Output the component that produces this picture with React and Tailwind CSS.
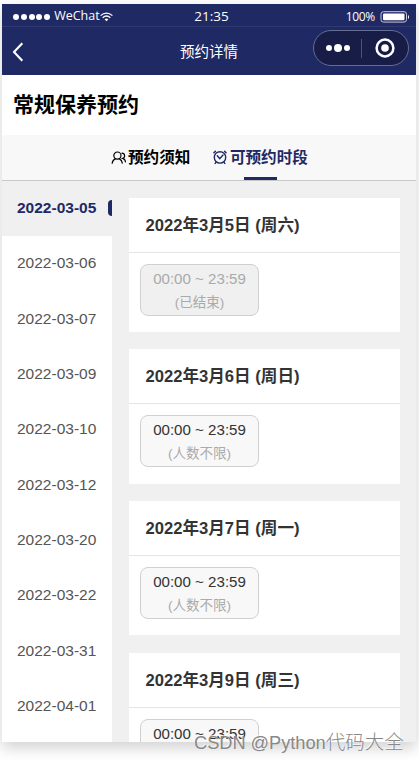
import React from 'react';

const dates = [
  '2022-03-05', '2022-03-06', '2022-03-07', '2022-03-09', '2022-03-10',
  '2022-03-12', '2022-03-20', '2022-03-22', '2022-03-31', '2022-04-01',
];

const days = [
  { title: '2022年3月5日 (周六)', note: '(已结束)', ended: true },
  { title: '2022年3月6日 (周日)', note: '(人数不限)' },
  { title: '2022年3月7日 (周一)', note: '(人数不限)' },
  { title: '2022年3月9日 (周三)', note: '(人数不限)' },
];

function StatusBar() {
  return (
    <div className="grid h-[23px] grid-cols-3 items-center border-b border-[#303a70] pl-[11px] pr-[6px] font-['Open_Sans','Noto_Sans',sans-serif] text-[12px] leading-none">
      <div className="flex items-center">
        <div className="flex gap-[1.8px] pt-[3px]">
          {[0, 1, 2, 3, 4].map((i) => <span key={i} className="size-[6px] rounded-full bg-white" />)}
        </div>
        <span className="ml-[4px] mt-[3px] text-[12.5px]">WeChat</span>
        <svg className="mt-[4px]" width="13" height="10" viewBox="0 0 13 10" fill="none" stroke="white" strokeWidth="1.3">
          <path d="M.6 3.6c3.5-3.3 8.3-3.3 11.8 0M2.7 5.7c2.3-2 5.3-2 7.6 0" />
          <path d="M4.6 7.3c1.2-1 2.6-1 3.8 0L6.5 9.2z" fill="white" stroke="none" />
        </svg>
      </div>
      <span className="mt-[3px] text-center text-[13.5px]">21:35</span>
      <div className="mt-[2px] flex items-center justify-end">
        <span className="mt-[1px] text-[12px] tracking-[-0.3px]">100%</span>
        <svg className="ml-[5px] mt-px" width="30" height="12" viewBox="0 0 30 12">
          <rect x="1" y=".7" width="25.5" height="10.4" rx="2.5" fill="none" stroke="#c8cadb" />
          <rect x="3" y="2.6" width="21.5" height="6.7" rx="1" fill="white" />
          <path d="M28 4c1.4.8 1.4 3.2 0 4z" fill="white" />
        </svg>
      </div>
    </div>
  );
}

function NavBar() {
  return (
    <div className="flex h-[47px] items-center pl-[10px] pr-[7px]">
      <svg className="mt-[3px]" width="12" height="20" viewBox="0 0 12 20" fill="none" stroke="white" strokeWidth="2.1">
        <path d="M10.3 1.2 2 10l8.3 8.8" />
      </svg>
      <h1 className="ml-[156px] mt-[3px] whitespace-nowrap text-[14.5px] leading-5">预约详情</h1>
      <div className="ml-auto mb-[5px] flex h-[36px] w-[96px] shrink-0 items-center rounded-full border border-[#666d92] bg-[#171d47]">
        <div className="flex w-[47px] items-center justify-center gap-[2px]">
          <span className="size-[6px] rounded-full bg-white" />
          <span className="size-[8px] rounded-full bg-white" />
          <span className="size-[6px] rounded-full bg-white" />
        </div>
        <span className="h-[19px] w-px bg-[#4b5179]" />
        <svg className="ml-[13px]" width="20" height="20" viewBox="0 0 20 20">
          <circle cx="10" cy="10" r="8.4" fill="none" stroke="white" strokeWidth="2.5" />
          <circle cx="10" cy="10" r="3.8" fill="white" />
        </svg>
      </div>
    </div>
  );
}

function PeopleIcon() {
  return (
    <svg width="16" height="14" viewBox="0 0 16 14" fill="none" stroke="currentColor" strokeWidth="1.2" strokeLinecap="round">
      <circle cx="6.4" cy="4.6" r="3.6" />
      <path d="M1.2 12.2c.2-2 1.5-3.6 3.1-4.3M8.4 7.9c1.7.7 2.6 2 2.9 4.3M11 2.2c3.2.2 3.5 4.4.7 5.2 1.9.6 2.6 1.7 2.7 3.4" />
    </svg>
  );
}

function ClockIcon() {
  return (
    <svg className="ml-px" width="14" height="15" viewBox="0 0 14 15" fill="none" stroke="currentColor" strokeWidth="1.4" strokeLinecap="round">
      <circle cx="7" cy="7.4" r="5.7" />
      <path d="m4.3 5.8 2.5 2.9L10 5M.9 2.8l1.5-1.6M13.1 2.8l-1.5-1.6M3 12.2l-.8 1.2M11 12.2l.8 1.2" />
    </svg>
  );
}

function DayCard({ day }) {
  return (
    <section className="h-[134.5px] shrink-0 bg-white">
      <h3 className="h-[55px] border-b border-[#e5e5e5] pl-[16.5px] text-[16.6px] font-bold leading-[55px] text-[#333]">{day.title}</h3>
      <div className={`ml-[11px] mt-[11px] h-[52px] w-[119px] rounded-[8px] border border-[#d0d0d0] text-center ${day.ended ? 'bg-[#f0f0f0] text-[#aaa]' : 'bg-[#f8f8f8] text-[#333]'}`}>
        <div className="pt-[2px] text-[15.1px] leading-[24px]">00:00 ~ 23:59</div>
        <div className="text-[13.5px] leading-[23px] text-[#aaa]">{day.note}</div>
      </div>
    </section>
  );
}

export default function App() {
  return (
    <div className="relative h-[761px] w-[419px] overflow-hidden bg-white pl-[2px] pt-[4px] font-['Liberation_Sans','Noto_Sans_CJK_SC',sans-serif]">
      <div className="flex h-[738px] w-[414px] flex-col overflow-hidden bg-[#f0f0f0] shadow-[0_6px_14px_rgba(0,0,0,0.18)]">
        <header className="h-[70.5px] shrink-0 bg-[#1f2964] text-white">
          <StatusBar />
          <NavBar />
        </header>
        <div className="h-[60.5px] shrink-0 bg-white pl-[11px]">
          <h2 className="text-[21px] font-bold leading-[60px] text-black">常规保养预约</h2>
        </div>
        <nav className="flex h-[46px] shrink-0 border-b border-[#c8c8c8] bg-[#f8f8f8] pl-[109px] text-[15.6px] font-bold leading-[45px]">
          <div className="flex items-center gap-[1px] text-black"><PeopleIcon /><span>预约须知</span></div>
          <div className="relative ml-[22px] flex items-center gap-[2.5px] text-[#1f2964]">
            <ClockIcon /><span>可预约时段</span>
            <span className="absolute bottom-0 left-[32px] h-[3px] w-[33px] bg-[#1f2964]" />
          </div>
        </nav>
        <main className="flex min-h-0 flex-1 overflow-hidden">
          <aside className="w-[110px] shrink-0 bg-white">
            {dates.map((date, i) => (
              <div key={date} className={`flex h-[55.3px] items-center justify-between overflow-hidden pb-[1px] pl-[15px] text-[15.5px] leading-[20px] ${i === 0 ? 'bg-[#f0f0f0] font-bold text-[#1f2964]' : 'text-[#555]'}`}>
                <span>{date}</span>
                {i === 0 && <span className="h-[16px] w-[4.5px] rounded-l-[4.5px] bg-[#1f2964]" />}
              </div>
            ))}
          </aside>
          <div className="ml-[17px] flex w-[271px] flex-col gap-[17.2px] pt-[16.6px]">
            {days.map((day) => <DayCard key={day.title} day={day} />)}
          </div>
        </main>
      </div>
      <div className="absolute left-[194px] top-[728px] whitespace-nowrap font-['Noto_Sans_CJK_SC',sans-serif] text-[19.5px] font-light leading-[26px] text-[#888] [text-shadow:-1px_-1px_0_rgba(255,255,255,0.7)]"><span className="font-['Liberation_Sans',sans-serif] text-[18.2px]">CSDN @Python</span>代码大全</div>
    </div>
  );
}
